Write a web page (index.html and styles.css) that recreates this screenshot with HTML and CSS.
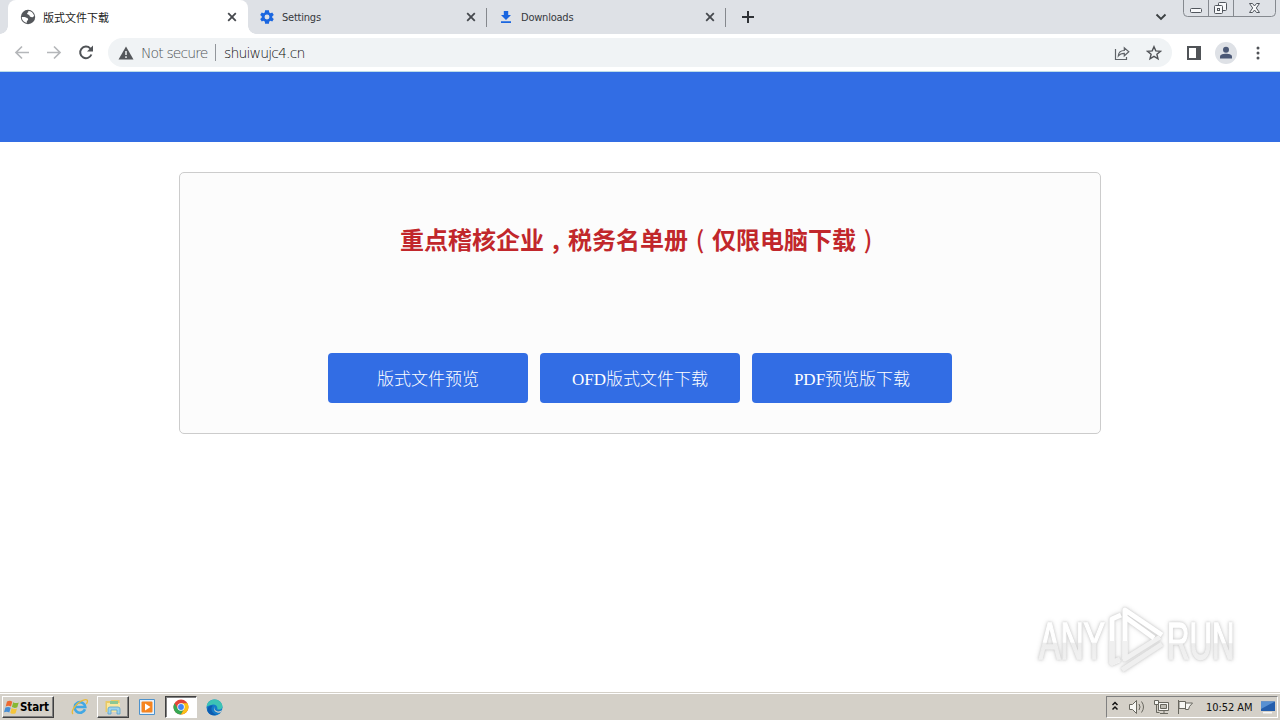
FILE: index.html
```html
<!DOCTYPE html>
<html lang="zh-CN">
<head>
<meta charset="utf-8">
<title>版式文件下载</title>
<link rel="stylesheet" href="styles.css">
</head>
<body>
<div class="screen">
  <header class="tabstrip">
    <div class="tab active">
      <svg width="16" height="16" viewBox="0 0 16 16"><circle cx="8" cy="8" r="7.200" fill="#54575b"/><path d="M1.800 8.100c2.500-.3 4 .2 5.500 1 1.300.8.900 2 .2 2.500-.8.600-.7 1.300-.8 2.300C4 13.300 1.700 11 1.800 8.100zM8.200 1.900c3 0 5.300 2 5.900 4.900-1 1.700-2.400 1.800-3.800 1-1-.5-.5-1.800-1.700-2-1.800-.3-1.900-1.500-.8-2.200.6-.4.600-.8.400-1.700z" fill="#fff"/></svg>
      <span class="tab-title">版式文件下载</span>
      <svg class="close" width="10" height="10" viewBox="0 0 10 10"><path d="M1.200 1.200l7.600 7.600m0-7.600L1.200 8.800" stroke="#45484d" stroke-width="1.800"/></svg>
    </div>
    <div class="tab">
      <svg width="16" height="16" viewBox="0 0 24 24"><path fill="#1a66e0" d="M19.900 13.100a8 8 0 0 0 0-2.200l2.300-1.800-2.300-4-2.700 1.100a8 8 0 0 0-1.900-1.100L14.900 2H9.100l-.4 3.100a8 8 0 0 0-1.900 1.100L4.100 5.100l-2.300 4 2.300 1.800a8 8 0 0 0 0 2.200l-2.300 1.800 2.300 4 2.700-1.100a8 8 0 0 0 1.900 1.100l.4 3.100h5.800l.4-3.100a8 8 0 0 0 1.900-1.100l2.700 1.100 2.300-4zM12 15.700a3.700 3.700 0 1 1 0-7.400 3.700 3.700 0 0 1 0 7.400z"/></svg>
      <span class="tab-title">Settings</span>
      <svg class="close" width="10" height="10" viewBox="0 0 10 10"><path d="M1.200 1.200l7.600 7.600m0-7.600L1.200 8.800" stroke="#45484d" stroke-width="1.800"/></svg>
    </div>
    <div class="tab">
      <svg width="16" height="16" viewBox="0 0 16 16"><path fill="#1a66e0" d="M5.800 2h4.400v4H13l-5 5-5-5h2.800zM3 12.300h10V14H3z"/></svg>
      <span class="tab-title">Downloads</span>
      <svg class="close" width="10" height="10" viewBox="0 0 10 10"><path d="M1.200 1.200l7.600 7.600m0-7.600L1.200 8.800" stroke="#45484d" stroke-width="1.800"/></svg>
    </div>
    <svg class="newtab" width="12" height="12" viewBox="0 0 12 12"><path d="M6 0v12M0 6h12" stroke="#2f3236" stroke-width="2"/></svg>
    <svg class="chevron" width="12" height="8" viewBox="0 0 12 8"><path d="M1.500 1.500L6 6l4.500-4.500" fill="none" stroke="#3c4043" stroke-width="1.900"/></svg>
    <svg class="winctl" width="94" height="18" viewBox="0 0 94 18"><path d="M.5 0v12.500q0 4 4 4h84q4 0 4-4V0M25.500 0v16.500M50.500 0v16.500" fill="none" stroke="#85898f"/><g fill="#f7f8fa" stroke="#51565d"><rect x="7.500" y="8.500" width="11" height="4" rx="1"/><rect x="35.500" y="2.500" width="8" height="8" rx="1"/><rect x="31.500" y="5.500" width="8" height="8" rx="1"/><rect x="34.500" y="8.500" width="2" height="2"/><path d="M66.500 3.500h3l2 2.500 2-2.500h3L73.300 8l3.200 4.500h-3l-2-2.500-2 2.500h-3L69.700 8z"/></g></svg>
  </header>

  <div class="toolbar">
    <svg class="nav" width="16" height="16" viewBox="0 0 16 16"><path d="M15 7.500H2m6-6l-6 6 6 6" fill="none" stroke="#b5b7ba" stroke-width="1.700"/></svg>
    <svg class="nav" width="16" height="16" viewBox="0 0 16 16"><path d="M1 7.500h13M8 1.500l6 6-6 6" fill="none" stroke="#b5b7ba" stroke-width="1.700"/></svg>
    <svg class="nav" width="16" height="16" viewBox="0 0 16 16"><path d="M13.400 9.500a5.800 5.800 0 1 1-1.200-6.100L14 5.200" fill="none" stroke="#505357" stroke-width="2"/><path d="M15 .5v6H9z" fill="#505357"/></svg>
    <div class="omnibox">
      <svg width="16" height="14" viewBox="0 0 16 14"><path d="M8 0.500L15.500 13.500H.5z" fill="#55585c"/><path d="M8 5v4m0 1.300V12" stroke="#f1f3f4" stroke-width="1.500"/></svg>
      <span class="insecure">Not secure</span>
      <span class="divider"></span>
      <span class="url">shuiwujc4.cn</span>
      <svg class="share" width="16" height="16" viewBox="0 0 16 16"><path d="M1.500 4v10.500h11V12M4.300 11c.2-3.600 2.400-5.500 6-5.500V2.800l4.500 4-4.500 4V8.300c-2.600 0-4.500.7-6 2.700z" fill="none" stroke="#5f6368" stroke-width="1.200"/></svg>
      <svg class="star" width="16" height="16" viewBox="0 0 16 16"><path d="M8 1.700l1.800 4.200 4.700.4-3.600 3 1.100 4.500L8 11.400l-4 2.400 1.100-4.500-3.600-3 4.700-.4z" fill="none" stroke="#505357" stroke-width="1.400"/></svg>
    </div>
    <svg class="panel" width="14" height="14" viewBox="0 0 14 14"><path d="M1 1h12v12H1z" fill="none" stroke="#505357" stroke-width="2"/><path d="M9 0h5v14H9z" fill="#505357"/></svg>
    <svg class="avatar" width="22" height="22" viewBox="0 0 22 22"><circle cx="11" cy="11" r="11" fill="#dee1e6"/><circle cx="11" cy="7.800" r="3" fill="#4b5875"/><path d="M5 16.500v-1.700C5 12.500 8 11.800 11 11.800s6 .7 6 3v1.700z" fill="#4b5875"/></svg>
    <svg class="dots" width="4" height="14" viewBox="0 0 4 14"><g fill="#505357"><circle cx="2" cy="2" r="1.500"/><circle cx="2" cy="7" r="1.500"/><circle cx="2" cy="12" r="1.500"/></g></svg>
  </div>

  <main class="page">
    <div class="banner"></div>
    <section class="card">
      <h1 class="headline">重点稽核企业<span class="mark comma">,</span>税务名单册<span class="mark">(</span>仅限电脑下载<span class="mark">)</span></h1>
      <div class="actions">
        <a class="button">版式文件预览</a>
        <a class="button">OFD版式文件下载</a>
        <a class="button">PDF预览版下载</a>
      </div>
    </section>
    <svg class="watermark" width="240" height="88" viewBox="0 0 240 88">
      <defs><linearGradient id="fade" x1="0" y1="0" x2="0" y2="1"><stop offset=".52" stop-color="#fff"/><stop offset=".54" stop-color="#ededed"/><stop offset="1" stop-color="#f3f3f3"/></linearGradient></defs>
      <g class="watermark-word" fill="url(#fade)" stroke="url(#fade)"><text transform="translate(9 56) scale(.63 1)">ANY</text><text transform="translate(137 56) scale(.61 1)">RUN</text></g>
      <g class="watermark-sign" fill="none" stroke-linejoin="round"><path d="M91 12l-9 4v44l7-3" stroke="#fff"/><path d="M82 38v22l8-4M92 67l40-26" stroke="#efefef"/><path d="M95 56V7l37 25" stroke="#fff"/><path d="M95 38v18l35-22" stroke="#f1f1f1"/><path d="M95 14l29 21" stroke="#fff"/></g>
    </svg>
  </main>

  <footer class="taskbar">
    <div class="start"><svg width="16" height="15" viewBox="0 0 16 15"><path d="M3 1.500q3-1.700 5.300.2L7 6.600Q4.500 5 1.700 6.400z" fill="#ed6930"/><path d="M9.200 2.200q2.600 1.600 5.500.3l-1.400 4.800q-2.700 1.300-5.400-.2z" fill="#87b832"/><path d="M1.400 7.500q3-1.300 5.300.2l-1.400 4.900Q3 10.900 0 12.300z" fill="#478ed4"/><path d="M7.600 8.100q2.700 1.600 5.400.3l-1.400 4.800q-2.700 1.300-5.300-.3z" fill="#f5c53a"/></svg><span>Start</span></div>
    <svg class="ie" width="18" height="18" viewBox="0 0 18 18"><path d="M14 11.300A5.300 5.300 0 1 1 14.300 9H5" fill="none" stroke="#42a8e4" stroke-width="2.600"/><path d="M2 16C-1 13 7 3 13.500 1.800c4-.7 3.300 2.400 1.800 4.200" fill="none" stroke="#e9ba3a" stroke-width="1.300"/></svg>
    <div class="task explorer"><svg width="18" height="18" viewBox="0 0 18 18"><path d="M1.500 3h5l1-1h8v12h-14z" fill="#e9c964"/><path d="M3 5h13v9H3z" fill="#f9e79e"/><path d="M6 3h8v3H6z" fill="#8bc792"/><path d="M4 16v-5q0-2 2-2h8q2 0 2 2v5h-3v-4H7v4z" fill="#9bd3ee" stroke="#58a2cb" stroke-width=".8"/></svg></div>
    <svg class="media" width="16" height="16" viewBox="0 0 16 16"><path d="M.5.500h15v15H.5z" fill="#e7f2fc" stroke="#4d92cc"/><rect x="2.500" y="2.500" width="11" height="11" rx="1" fill="#f5841f"/><path d="M6 4.500v7L11.500 8z" fill="#fff"/></svg>
    <div class="task current"><svg width="16" height="16" viewBox="0 0 16 16"><circle cx="8" cy="8" r="7.500" fill="#e24538"/><path d="M1.500 4.200A7.500 7.500 0 0 0 8 15.500L11.200 9.800 5 10z" fill="#35a853"/><path d="M14.500 4.300A7.500 7.500 0 0 1 8 15.500l3.400-6L8 4.300z" fill="#fbc116"/><circle cx="8" cy="8" r="3.700" fill="#fff"/><circle cx="8" cy="8" r="2.900" fill="#4285f4"/></svg></div>
    <svg class="edge" width="17" height="17" viewBox="0 0 17 17"><circle cx="8.500" cy="8.500" r="8" fill="#137bc9"/><path d="M.6 7.500C1.500-1.200 14-2.200 16.400 6.500c.7 3-2 4.800-5.200 3.800 1-3-2-5.300-5-4.600C3 6.200 1.500 7.500.6 7.500z" fill="#3cc3b5"/><path d="M6.800 6.800c-3 3-.8 7.800 4.300 8.900-4 1.600-9.400-.6-9.700-4.800C1.300 8 4.500 5.900 6.800 6.800z" fill="#0d5cb0"/><path d="M8.600 7.600c-1 2.300.4 4.700 3.500 4.800 1.600.1 3-.6 4-1.300l-.8 2c-1 .5-2.200.8-3.300.6-3.500-.4-5-3.700-3.400-6.100z" fill="#d4d0c8"/></svg>
    <div class="tray">
      <svg width="170" height="20" viewBox="0 0 170 20"><path d="M5.500 8L8 5.500 10.500 8m-5 4.500L8 10l2.500 2.500" fill="none" stroke="#111" stroke-width="1.500"/><g fill="#f7f7f4" stroke="#68675f"><path d="M22.500 7.500h3l4-4v13l-4-4h-3z"/><path d="M32 7q2 3 0 6m2.500-8.500q4 5.500 0 11" fill="none"/><path d="M51.500 5.500h10v8h-10z"/><path d="M53.500 7.500h6v4h-6z" fill="#bfbdb5"/><path d="M53 16.500h8M57 14v2.500M49.500 8v7.500h3" fill="none"/><path d="M47.500 3.500h4v4h-4z"/><path d="M71.500 3v14M72 4.500h6.500v7H72zM78.500 6h7l-3 3.500-1 3h-3z"/></g><path d="M154 4.500h14V14h-14z" fill="#245eac"/><path d="M154 4.500h14L154 12z" fill="#5790d2"/><path d="M156 15h9v1.500h-9z" fill="#f6f6f6"/></svg>
      <span class="clock">10:52 AM</span>
    </div>
  </footer>
</div>
</body>
</html>
```
FILE: styles.css
```css
* { box-sizing: border-box; }
body { margin: 0; font-family: "DejaVu Sans Condensed", "DejaVu Sans", "Noto Sans CJK SC", sans-serif; font-stretch: condensed; }
svg { display: block; flex: none; }
.screen { width: 1280px; height: 720px; display: flex; flex-direction: column; overflow: hidden; background: #fff; }
.tabstrip { height: 34px; flex: none; display: flex; padding-left: 8px; background: #dee1e6; }
.tab { width: 239px; height: 34px; display: flex; align-items: center; padding: 0 11px 0 11px; position: relative; }
.tab.active { width: 240px; padding-left: 12px; background: #fff; border-radius: 8px 8px 0 0; }
.tab.active::before, .tab.active::after { content: ""; position: absolute; bottom: 0; width: 8px; height: 8px; }
.tab.active::before { left: -8px; background: radial-gradient(circle at 0 0, transparent 7.5px, #fff 8px); }
.tab.active::after { right: -8px; background: radial-gradient(circle at 100% 0, transparent 7.5px, #fff 8px); }
.tab + .tab:not(.active)::after { content: ""; position: absolute; right: 0; top: 8px; width: 1px; height: 19px; background: #85888d; }
.tab-title { margin-left: 7px; white-space: nowrap; color: #36393d; font: 11px "DejaVu Sans Condensed", "DejaVu Sans", "Noto Sans CJK SC", sans-serif; font-stretch: condensed; letter-spacing: -.22px; }
.active .tab-title { letter-spacing: 0; color: #222; }
.close { margin-left: auto; }
.newtab { margin: 11px 0 0 16px; }
.chevron { margin: 13px 0 0 auto; }
.winctl { margin: 0 3px 0 16px; }
.toolbar { height: 37px; flex: none; display: flex; align-items: center; padding-left: 14px; background: #fff; }
.nav { margin-right: 16px; }
.omnibox { width: 1064px; height: 29px; display: flex; align-items: center; margin-left: -2px; padding: 0 10px; border-radius: 15px; background: #f0f3f5; font-size: 14px; white-space: nowrap; }
.insecure, .url { font-family: "DejaVu Sans", sans-serif; font-stretch: normal; font-weight: 200; }
.insecure { width: 68px; margin-left: 7px; color: #505357; letter-spacing: -.9px; }
.divider { width: 1px; height: 17px; margin: 0 8px 0 6px; background: #92969b; }
.url { color: #111; letter-spacing: -.85px; }
.share { margin-left: auto; margin-right: 16px; }
.panel { margin-left: 15px; }
.avatar { margin-left: 14px; }
.dots { margin-left: 19px; }
.page { flex: 1; min-height: 0; position: relative; border-top: 1px solid #bddde8; }
.banner { height: 70px; background: #326de4; }
.card { width: 922px; height: 262px; margin: 30px auto 0; padding: 48px 0 0; border: 1px solid #ccc; border-radius: 5px; background: #fcfcfc; }
.headline { margin: 0; font: bold 24px/36px "Noto Sans CJK SC", sans-serif; text-align: center; color: #c1272b; height: 36px; white-space: nowrap; }
.mark { display: inline-block; width: 24px; text-align: center; font-weight: 500; line-height: 24px; }
.comma { font-weight: 700; }
.actions { display: flex; justify-content: center; gap: 12px; margin-top: 96px; }
.button { width: 200px; height: 50px; border-radius: 4px; background: #326de4; color: #fff; text-align: center; font: 300 17px/54px "Liberation Serif", "Noto Sans CJK SC", serif; }
.watermark { position: absolute; left: 1030px; top: 531px; filter: drop-shadow(0 0 1px #ccc) drop-shadow(0 0 2px #ddd); }
.watermark-word { font: 51px "Liberation Sans", sans-serif; stroke-width: 1.5px; }
.watermark-sign { stroke-width: 5px; }
.taskbar { height: 28px; flex: none; display: flex; align-items: center; padding: 2px 2px 1px; background: #d4d0c8; border-top: 1px solid #d4d0c8; box-shadow: inset 0 1px #fff; }
.start { width: 52px; height: 22px; display: flex; align-items: center; padding-left: 1px; border: 1px solid; border-color: #fff #404040 #404040 #fff; box-shadow: inset -1px -1px #808080; font: bold 11.5px "DejaVu Sans Condensed", "DejaVu Sans", sans-serif; font-stretch: condensed; letter-spacing: -.1px; color: #000; }
.ie { margin-left: 17px; }
.task { width: 32px; height: 22px; display: flex; align-items: center; justify-content: center; border: 1px solid; }
.explorer { margin-left: 8px; border-color: #fff #404040 #404040 #fff; box-shadow: inset -1px -1px #808080; }
.media { margin-left: 10px; }
.current { margin-left: 10px; background: #fff; border-color: #404040 #fff #fff #404040; box-shadow: inset 1px 1px #808080; }
.edge { margin-left: 9px; }
.tray { margin-left: auto; width: 172px; height: 22px; position: relative; border: 1px solid; border-color: #808080 #fff #fff #808080; }
.clock { position: absolute; left: 99px; top: 4px; font-size: 11px; line-height: 13px; letter-spacing: -.05px; white-space: nowrap; color: #111; }
```
